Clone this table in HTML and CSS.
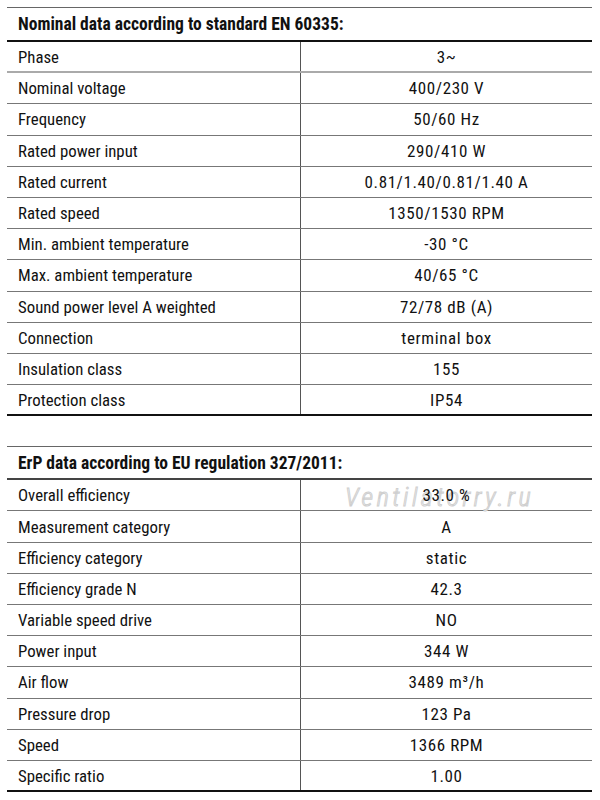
FILE: index.html
```html
<!DOCTYPE html>
<html>
<head>
<meta charset="utf-8">
<link rel="stylesheet" href="styles.css">
</head>
<body>
<div class="page">
  <section class="spec">
    <div class="head">Nominal data according to standard EN 60335:</div>
    <div class="row first"><div class="k">Phase</div><div class="v">3~</div></div>
    <div class="row"><div class="k">Nominal voltage</div><div class="v">400/230 V</div></div>
    <div class="row"><div class="k">Frequency</div><div class="v">50/60 Hz</div></div>
    <div class="row"><div class="k">Rated power input</div><div class="v">290/410 W</div></div>
    <div class="row"><div class="k">Rated current</div><div class="v">0.81/1.40/0.81/1.40 A</div></div>
    <div class="row"><div class="k">Rated speed</div><div class="v">1350/1530 RPM</div></div>
    <div class="row"><div class="k">Min. ambient temperature</div><div class="v">-30 °C</div></div>
    <div class="row"><div class="k">Max. ambient temperature</div><div class="v">40/65 °C</div></div>
    <div class="row"><div class="k">Sound power level A weighted</div><div class="v">72/78 dB (A)</div></div>
    <div class="row"><div class="k">Connection</div><div class="v">terminal box</div></div>
    <div class="row"><div class="k">Insulation class</div><div class="v">155</div></div>
    <div class="row last"><div class="k">Protection class</div><div class="v">IP54</div></div>
  </section>
  <section class="spec second">
    <div class="watermark">Ventilatorry.ru</div>
    <div class="head dark">ErP data according to EU regulation 327/2011:</div>
    <div class="row"><div class="k">Overall efficiency</div><div class="v">33.0 %</div></div>
    <div class="row"><div class="k">Measurement category</div><div class="v">A</div></div>
    <div class="row"><div class="k">Efficiency category</div><div class="v">static</div></div>
    <div class="row"><div class="k">Efficiency grade N</div><div class="v">42.3</div></div>
    <div class="row"><div class="k">Variable speed drive</div><div class="v">NO</div></div>
    <div class="row"><div class="k">Power input</div><div class="v">344 W</div></div>
    <div class="row"><div class="k">Air flow</div><div class="v">3489 m³/h</div></div>
    <div class="row"><div class="k">Pressure drop</div><div class="v">123 Pa</div></div>
    <div class="row"><div class="k">Speed</div><div class="v">1366 RPM</div></div>
    <div class="row last"><div class="k">Specific ratio</div><div class="v">1.00</div></div>
  </section>
</div>
</body>
</html>
```
FILE: styles.css
```css
html, body {
  margin: 0;
  padding: 0;
  background: #fff;
}
body {
  font-family: "Roboto", "Open Sans", sans-serif;
  font-stretch: 75%;
  font-size: 16.8px;
  color: #111;
}
.page {
  padding: 7px 8px 0 7px;
}
.spec {
  position: relative;
  border-top: 1px solid #666;
}
.second {
  margin-top: 30px;
}
.head {
  box-sizing: border-box;
  height: 34px;
  display: flex;
  align-items: center;
  padding-left: 11px;
  font-size: 17.5px;
  font-weight: bold;
  border-bottom: 2px solid #111;
}
.head.dark {
  border-bottom-color: #444;
  height: 33px;
}
.row {
  box-sizing: border-box;
  display: grid;
  grid-template-columns: 294px 1fr;
  height: 31.2px;
  border-bottom: 1px solid #777;
}
.row.first {
  border-bottom: 2px solid #aaa;
}
.row.last {
  border-bottom: 2px solid #111;
}
.k {
  display: flex;
  align-items: center;
  padding-left: 11px;
  border-right: 1px solid #555;
}
.v {
  position: relative;
  display: flex;
  align-items: center;
  justify-content: center;
  font-size: 17px;
  letter-spacing: 0.6px;
}
.watermark {
  position: absolute;
  left: 338px;
  top: 35px;
  font-family: "Roboto", sans-serif;
  font-stretch: 75%;
  font-style: italic;
  font-weight: 300;
  font-size: 26px;
  line-height: 30px;
  letter-spacing: 3.5px;
  color: #fff;
  -webkit-text-stroke: 1px #cfcfcf;
  pointer-events: none;
}
```
